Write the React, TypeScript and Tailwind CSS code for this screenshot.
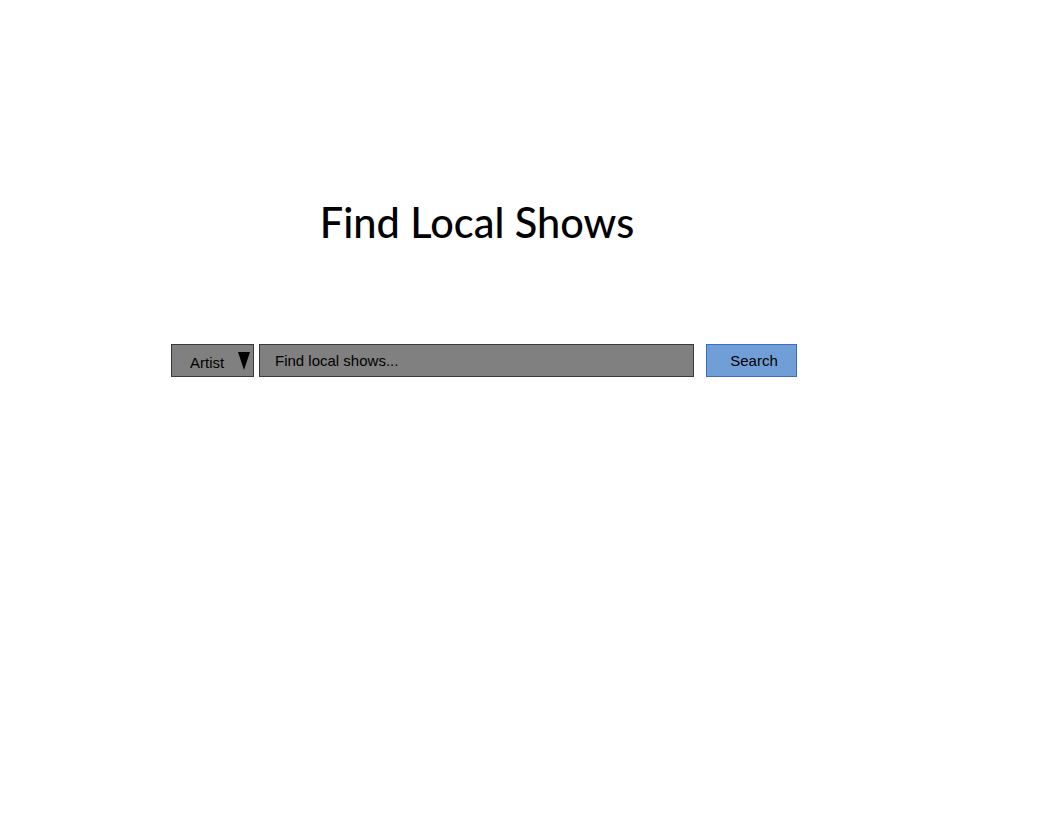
import React from "react";

export default function App() {
  return (
    <div className="min-h-[816px] w-[1056px] bg-white" style={{ fontFamily: "'Liberation Sans', Arial, sans-serif" }}>
      <div className="pl-[171px] pt-[197px]">
        <h1
          className="w-[612px] text-center text-[41.5px] font-medium leading-[50px] text-black"
          style={{ fontFamily: "Lato, 'Noto Sans', sans-serif" }}
        >
          Find Local Shows
        </h1>
        <div className="mt-[97px] flex items-start">
          <div className="flex h-[33px] w-[83px] items-center border border-[#3a3a3a] bg-[#808080] text-[15px] text-black">
            <span className="ml-[18px] mt-[5px]">Artist</span>
            <svg className="ml-[14px]" width="12" height="18" viewBox="0 0 12 18">
              <polygon points="0,0 12,0 6,18" fill="#000" />
            </svg>
          </div>
          <div className="ml-[5px] flex h-[33px] w-[435px] items-center border border-[#3a3a3a] bg-[#808080] pl-[15px] pt-[2px] text-[15px] text-black">
            Find local shows...
          </div>
          <button className="ml-[12px] flex h-[33px] w-[91px] items-center justify-center border border-[#3b6fbf] bg-[#6f9fd6] pl-[5px] pt-[2px] text-[15px] text-black">
            Search
          </button>
        </div>
      </div>
    </div>
  );
}
